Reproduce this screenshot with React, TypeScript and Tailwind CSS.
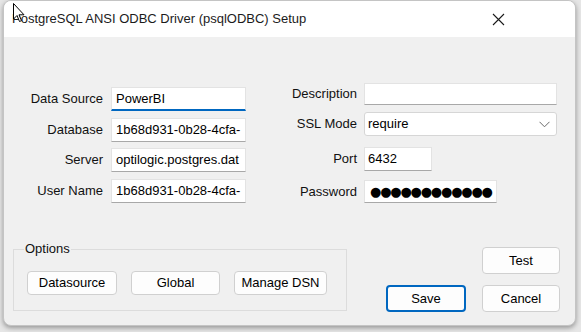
import React from "react";

const Field = ({ label, value, focused }: { label: string; value: string; focused?: boolean }) => (
  <div className="flex items-center h-[24px]">
    <span className="w-[98px] shrink-0 whitespace-nowrap text-right pr-[8px] text-[13px] text-[#111]">{label}</span>
    <div
      className={
        "w-[135px] h-[24px] shrink-0 bg-white flex items-center pl-[4px] overflow-hidden whitespace-nowrap text-[13px] text-black border border-[#e3e3e3] " +
        (focused ? "border-b-2 border-b-[#0067c0]" : "border-b-[#a8a8a8]")
      }
    >
      {value}
    </div>
  </div>
);

const Btn = ({ label, w, h, primary }: { label: string; w: string; h: string; primary?: boolean }) => (
  <button
    className={
      "bg-[#fdfdfd] rounded-[4px] text-[13px] text-black flex items-center justify-center " +
      w +
      " " +
      h +
      (primary ? " border-2 border-[#0067c0]" : " border border-[#d0d0d0]")
    }
  >
    {label}
  </button>
);

const RLabel = ({ children }: { children: React.ReactNode }) => (
  <span className="w-[74px] shrink-0 whitespace-nowrap text-right pr-[7px] text-[13px] text-[#111]">{children}</span>
);

const App = () => {
  return (
    <div className="w-[581px] h-[332px] bg-[#e6e6e6] overflow-hidden relative font-['Liberation_Sans',sans-serif]">
      {/* window */}
      <div className="ml-[3px] w-[573px] h-[326px] rounded-[8px] bg-[#f0f0f0] flex flex-col overflow-hidden border border-[#c4c4c4] shadow-[0_2px_5px_rgba(0,0,0,0.35)]">
        {/* title bar */}
        <div className="h-[36px] bg-white flex items-center justify-between pl-[8px] pr-[70px] shrink-0">
          <span className="text-[13px] text-[#1b1b1b]">PostgreSQL ANSI ODBC Driver (psqlODBC) Setup</span>
          <svg width="13" height="13" viewBox="0 0 13 13">
            <path d="M1 1 L12 12 M12 1 L1 12" stroke="#1b1b1b" strokeWidth="1.1" />
          </svg>
        </div>

        {/* body */}
        <div className="flex flex-col">
          <div className="flex items-start">
            {/* left column */}
            <div className="flex flex-col gap-[6.5px] mt-[50px] ml-[9px]">
              <Field label="Data Source" value="PowerBI" focused />
              <Field label="Database" value="1b68d931-0b28-4cfa-" />
              <Field label="Server" value="optilogic.postgres.dat" />
              <Field label="User Name" value="1b68d931-0b28-4cfa-" />
            </div>

            {/* right column */}
            <div className="flex flex-col mt-[46px] ml-[44px]">
              <div className="flex items-center h-[22px]">
                <RLabel>Description</RLabel>
                <div className="w-[193px] h-[22px] bg-white border border-[#e3e3e3] border-b-[#a8a8a8]" />
              </div>
              <div className="flex items-center h-[24px] mt-[7px]">
                <RLabel>SSL Mode</RLabel>
                <div className="w-[193px] h-[24px] bg-white border border-[#d6d6d6] rounded-[3px] flex items-center justify-between pl-[3px] pr-[6px] text-[13px] text-black">
                  <span>require</span>
                  <svg width="11" height="7" viewBox="0 0 11 7">
                    <polyline points="0.5,0.8 5.5,5.8 10.5,0.8" fill="none" stroke="#6a6a6a" strokeWidth="1" />
                  </svg>
                </div>
              </div>
              <div className="flex items-center h-[24px] mt-[11px]">
                <RLabel>Port</RLabel>
                <div className="w-[68px] h-[24px] bg-white border border-[#e3e3e3] border-b-[#a8a8a8] flex items-center pl-[3px] text-[13px] text-black">
                  6432
                </div>
              </div>
              <div className="flex items-center h-[23px] mt-[9px]">
                <RLabel>Password</RLabel>
                <div className="w-[133px] h-[23px] bg-white border border-[#e3e3e3] border-b-[#a8a8a8] flex items-center pl-[5px] overflow-hidden whitespace-nowrap text-[13px] leading-none tracking-[-1.2px] text-black font-['DejaVu_Sans',sans-serif]">
                  ●●●●●●●●●●●●
                </div>
              </div>
            </div>
          </div>

          {/* bottom */}
          <div className="flex items-start mt-[44px]">
            <div className="relative mt-[2px] ml-[9px] w-[334px] h-[62px] border border-[#dcdcdc] flex items-start gap-[14px] pt-[21px] pl-[13px]">
              <span className="absolute left-[10px] top-[-9px] bg-[#f0f0f0] px-[1px] text-[13px] leading-[16px] text-[#111]">
                Options
              </span>
              <Btn label="Datasource" w="w-[90px]" h="h-[24px]" />
              <Btn label="Global" w="w-[89px]" h="h-[24px]" />
              <Btn label="Manage DSN" w="w-[93px]" h="h-[24px]" />
            </div>
            <div className="flex flex-col items-end ml-[39px]">
              <Btn label="Test" w="w-[78px]" h="h-[27px]" />
              <div className="flex gap-[16px] mt-[11px]">
                <Btn label="Save" w="w-[80px]" h="h-[27px]" primary />
                <Btn label="Cancel" w="w-[78px]" h="h-[27px]" />
              </div>
            </div>
          </div>
        </div>
      </div>

      {/* mouse pointer */}
      <svg className="absolute left-[13px] top-[3px]" width="13" height="20" viewBox="0 0 13 20">
        <path d="M0.5 0.5 L0.5 16 L4 12.5 L6.5 18.5 L8.5 17.6 L6 11.8 L11 11.8 Z" fill="white" stroke="black" strokeWidth="1" />
      </svg>
    </div>
  );
};

export default App;
